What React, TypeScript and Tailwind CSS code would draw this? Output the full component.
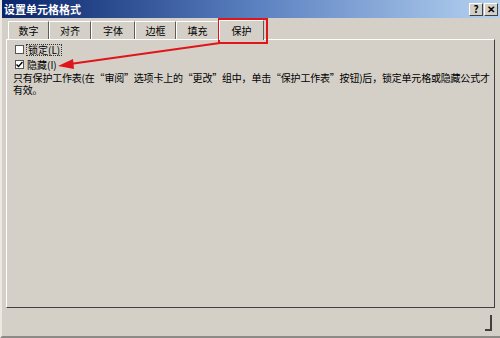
import React from 'react';

const cjk = { fontFamily: '"Noto Sans CJK SC", "SimSun", sans-serif' };

const tabs = [
  { label: '数字', w: 'w-[41px]' },
  { label: '对齐', w: 'w-[42px]' },
  { label: '字体', w: 'w-[44px]' },
  { label: '边框', w: 'w-[41px]' },
  { label: '填充', w: 'w-[43px]' },
];

function TitleButton({ children }: { children: React.ReactNode }) {
  return (
    <div className="w-[14px] h-[13px] bg-[#d4d0c8] border-t border-l border-t-white border-l-white border-r border-b border-r-[#404040] border-b-[#404040] flex items-center justify-center text-[10px] font-bold leading-none text-black">
      {children}
    </div>
  );
}

export default function App() {
  return (
    <div className="relative w-[500px] h-[338px] bg-[#d4d0c8] overflow-hidden flex flex-col border-l-2 border-l-[#ece9e2] border-b-2 border-b-[#8c8a84]" style={cjk}>
      {/* Title bar */}
      <div className="h-[18px] flex items-center justify-between pl-[2px] pr-[2px] bg-gradient-to-r from-[#0a246a] via-[#5a7fbf] to-[#b6d2f0]">
        <span className="text-white font-bold text-[11px] leading-none">设置单元格格式</span>
        <div className="flex gap-[1px]">
          <TitleButton>?</TitleButton>
          <TitleButton>✕</TitleButton>
        </div>
      </div>

      {/* Tabs */}
      <div className="flex items-end h-[21px] pl-[6px]">
        {tabs.map((t) => (
          <div
            key={t.label}
            className={`${t.w} h-[18px] flex items-center justify-center text-[10px] text-black border-t border-t-white border-l border-l-white border-r border-r-[#5e5c58]`}
          >
            {t.label}
          </div>
        ))}
        <div className="w-[45px] h-[20px] -mb-[1px] flex items-center justify-center text-[10px] text-black bg-[#d4d0c8] border-t border-t-white border-l border-l-white border-r border-r-[#5e5c58] relative z-10">
          保护
        </div>
      </div>

      {/* Panel */}
      <div className="ml-[4px] mr-[5px] h-[269px] border-t border-l border-t-white border-l-white border-r border-b border-r-[#404040] border-b-[#404040] pl-[6px] pt-[3px] text-[10px] text-black">
        <label className="flex items-center h-[13px] gap-[2px] pl-[2px]">
          <span className="w-[9px] h-[9px] bg-white border border-[#555]" />
          <span className="border border-dotted border-[#333] px-[1px] leading-[10px]">锁定(L)</span>
        </label>
        <label className="flex items-center h-[13px] gap-[3px] pl-[2px] mt-[2px]">
          <span className="w-[9px] h-[9px] bg-white border border-[#555] flex items-center justify-center">
            <svg width="7" height="7" viewBox="0 0 7 7">
              <path d="M0.5 3.5 L2.5 5.5 L6.5 1" stroke="#000" strokeWidth="1.4" fill="none" />
            </svg>
          </span>
          <span className="leading-[10px]">隐藏(I)</span>
        </label>
        <div className="mt-[1px] flex flex-col tracking-[-0.2px]">
          <span className="h-[12px] leading-[12px] whitespace-nowrap">
            只有保护工作表(在“审阅”选项卡上的“更改”组中，单击“保护工作表”按钮)后，锁定单元格或隐藏公式才
          </span>
          <span className="h-[12px] leading-[12px]">有效。</span>
        </div>
      </div>

      {/* Bottom area with resize grip */}
      <div className="flex-1 flex justify-end items-end pr-[8px] pb-[5px]">
        <div className="w-[7px] h-[16px] border-r-2 border-b-2 border-[#404040]" />
      </div>

      {/* Annotation: red box around 保护 tab and arrow */}
      <div className="absolute left-[216px] top-[18px] w-[50px] h-[26px] border-2 border-[#e0151a]" />
      <svg className="absolute left-0 top-0" width="500" height="338" viewBox="0 0 500 338">
        <line x1="218" y1="43" x2="68" y2="64" stroke="#e0151a" strokeWidth="2" />
        <polygon points="56,66 71,59 72,69" fill="#e0151a" />
      </svg>
    </div>
  );
}
